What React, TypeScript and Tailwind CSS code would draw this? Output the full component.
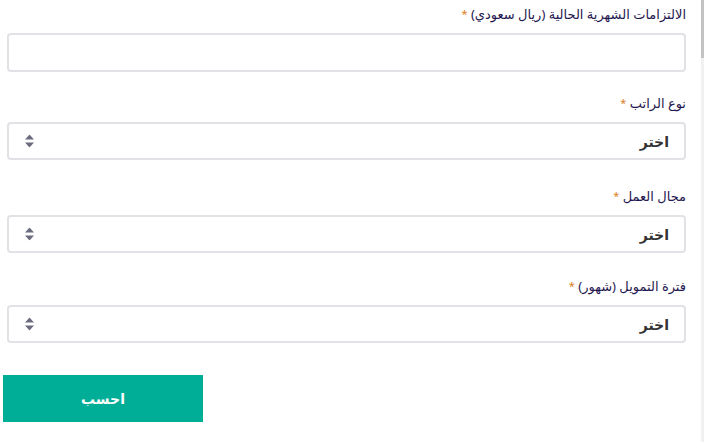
import { ChangeEvent, useState } from "react";

const fields = [
  { label: "نوع الراتب", top: "mt-[21px]" },
  { label: "مجال العمل", top: "mt-[26px]" },
  { label: "فترة التمويل (شهور)", top: "mt-[23px]" },
];

function Label({ text }: { text: string }) {
  return (
    <label className="block h-5 text-[13px] leading-5 text-[#1f1850]">
      {text} <span className="align-top text-[11px] text-[#d9821c]">*</span>
    </label>
  );
}

function SelectBox() {
  const [value, setValue] = useState("");
  return (
    <div className="relative mt-[9px] h-[38px] rounded-[4px] border-2 border-[#e1e1e6] bg-white">
      <select
        value={value}
        onChange={(e: ChangeEvent<HTMLSelectElement>) => setValue(e.target.value)}
        className="h-full w-full appearance-none bg-transparent pr-[15px] text-[14px] font-bold text-[#333] outline-none"
      >
        <option value="">اختر</option>
      </select>
      {/* up/down arrows */}
      <svg
        className="pointer-events-none absolute left-[16px] top-1/2 -translate-y-1/2"
        width="9"
        height="13"
        viewBox="0 0 9 13"
      >
        <path d="M4.5 0 L9 5 H0 Z" fill="#6c6c80" />
        <path d="M4.5 13 L9 8 H0 Z" fill="#6c6c80" />
      </svg>
    </div>
  );
}

export default function App() {
  const [debt, setDebt] = useState("");

  return (
    <div
      className="flex h-[442px] w-[704px] overflow-hidden bg-white"
      style={{ fontFamily: '"Noto Sans", "DejaVu Sans", sans-serif' }}
    >
      <div className="flex-1">
        <form dir="rtl" className="pl-[7px] pr-[15px] pt-1">
          <Label text="الالتزامات الشهرية الحالية (ريال سعودي)" />
          <input
            value={debt}
            onChange={(e) => setDebt(e.target.value)}
            className="mt-[9px] block h-[39px] w-full rounded-[4px] border-2 border-[#e1e1e6] px-3 text-[14px] outline-none"
          />

          {fields.map((f) => (
            <div key={f.label} className={f.top}>
              <Label text={f.label} />
              <SelectBox />
            </div>
          ))}
        </form>

        <div className="mt-[32px] pl-[3px]">
          <button className="h-[47px] w-[200px] bg-[#00ae97] text-[14px] font-bold text-white">
            احسب
          </button>
        </div>
      </div>

      {/* scrollbar strip */}
      <div className="flex w-[3px] flex-col bg-[#f1f1f1]">
        <div className="h-[58px] bg-[#c3c3c3]" />
      </div>
    </div>
  );
}
